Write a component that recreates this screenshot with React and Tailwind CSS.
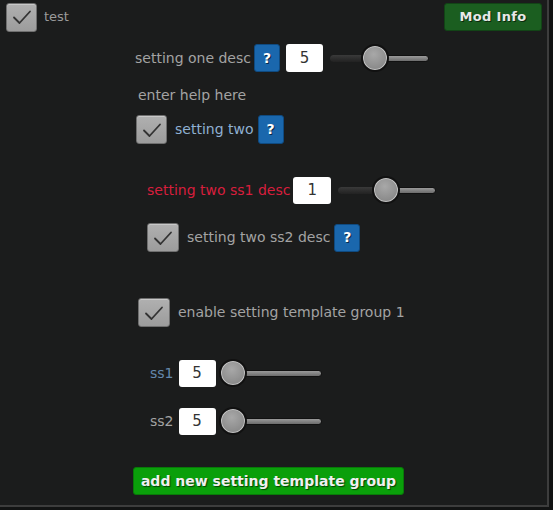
import React from "react";

const FONT = { fontFamily: '"DejaVu Sans", Verdana, sans-serif' };

function Check({ className = "" }) {
  return (
    <div className={`w-[31px] h-[29px] rounded-[3px] border border-[#6f6f6f] bg-gradient-to-b from-[#b0b0b0] to-[#9c9c9c] shadow-[inset_0_1px_0_#c8c8c8] flex items-center justify-center ${className}`}>
      <svg width="20" height="16" viewBox="0 0 20 16" fill="none">
        <path d="M2 8.5 L7.5 14 L18 2.5" stroke="#333" strokeWidth="1.8" strokeLinecap="round" strokeLinejoin="round" />
      </svg>
    </div>
  );
}

function Help({ className = "" }) {
  return (
    <div className={`w-[26px] h-[28px] rounded-[3px] bg-[#1a67ad] border border-[#0f4a80] flex items-center justify-center text-white text-[14px] font-bold [text-shadow:1px_1px_0_#0a2a4a] ${className}`}>
      ?
    </div>
  );
}

function NumBox({ value, className = "" }) {
  return (
    <div className={`w-[37px] h-[27px] rounded-[3px] bg-white flex items-center justify-center text-[15px] text-[#333] ${className}`}>
      {value}
    </div>
  );
}

function Slider({ width, pos, className = "" }) {
  const left = Math.round(pos * (width - 28));
  return (
    <div className={`relative h-[28px] ${className}`} style={{ width }}>
      <div className="absolute left-0 right-0 top-[11px] h-[7px] rounded-full border border-[#111] bg-gradient-to-b from-[#9a9a9a] to-[#6c6c6c]" />
      <div className="absolute left-0 top-[11px] h-[7px] rounded-l-full bg-gradient-to-b from-[#3a3a3a] to-[#222]" style={{ width: left + 14 }} />
      <div className="absolute top-0 w-[28px] h-[28px] rounded-full border-2 border-[#111] bg-[#9a9a9a] shadow-[inset_0_0_0_1px_#c4c4c4] bg-[radial-gradient(circle_at_45%_35%,#a8a8a8,#7e7e7e)]" style={{ left }} />
    </div>
  );
}

export default function App() {
  return (
    <div className="w-[553px] h-[510px] bg-[#121313] overflow-hidden" style={FONT}>
      <div className="w-[549px] h-[507px] bg-[#1b1c1c] border-r-2 border-b-2 border-[#3d3d3d] flex flex-col">
        {/* top bar */}
        <div className="flex items-center h-[28px] mt-[3px] pl-[6px]">
          <Check className="w-[30px] h-[28px]" />
          <span className="ml-[7px] text-[13px] text-[#9a9a9a]">test</span>
          <button className="ml-auto mr-[5px] w-[98px] h-[28px] rounded-[3px] bg-[#1b5e20] border border-[#124416] text-[13px] font-bold tracking-[0.3px] text-[#e8e8e8] [text-shadow:1px_1px_0_#0b2a0d]">
            Mod Info
          </button>
        </div>

        {/* setting one */}
        <div className="flex items-center h-[28px] mt-[13px] ml-[135px]">
          <span className="text-[14px] text-[#a3a3a3]">setting one desc</span>
          <Help className="ml-[3px]" />
          <NumBox value="5" className="ml-[6px] h-[28px]" />
          <Slider width={99} pos={0.44} className="ml-[7px]" />
        </div>

        <div className="mt-[15px] ml-[138px] text-[14px] leading-[17px] text-[#a3a3a3]">enter help here</div>

        {/* setting two */}
        <div className="flex items-center h-[29px] mt-[11px] ml-[136px]">
          <Check />
          <span className="ml-[8px] text-[14px] text-[#8fb0d2]">setting two</span>
          <Help className="ml-[4px] h-[29px]" />
        </div>

        <div className="flex items-center h-[28px] mt-[32px] ml-[147px]">
          <span className="text-[14px] text-[#d81e3c]">setting two ss1 desc</span>
          <NumBox value="1" className="ml-[3px] w-[38px]" />
          <Slider width={98} pos={0.49} className="ml-[7px]" />
        </div>

        <div className="flex items-center h-[29px] mt-[19px] ml-[147px]">
          <Check className="w-[32px]" />
          <span className="ml-[8px] text-[14px] text-[#a3a3a3]">setting two ss2 desc</span>
          <Help className="ml-[4px]" />
        </div>

        {/* template group */}
        <div className="flex items-center h-[29px] mt-[46px] ml-[138px]">
          <Check className="w-[32px]" />
          <span className="ml-[8px] text-[14px] text-[#a3a3a3]">enable setting template group 1</span>
        </div>

        <div className="flex items-center h-[28px] mt-[32px] ml-[150px]">
          <span className="text-[14px] text-[#6488ad]">ss1</span>
          <NumBox value="5" className="ml-[5px] w-[36px]" />
          <Slider width={103} pos={0} className="ml-[3px]" />
        </div>

        <div className="flex items-center h-[28px] mt-[20px] ml-[150px]">
          <span className="text-[14px] text-[#a3a3a3]">ss2</span>
          <NumBox value="5" className="ml-[5px] w-[36px]" />
          <Slider width={103} pos={0} className="ml-[3px]" />
        </div>

        <button className="mt-[32px] ml-[133px] w-[271px] h-[28px] rounded-[3px] bg-[#0a9f0a] border border-[#087a08] text-[14px] font-bold text-[#f0f0f0] [text-shadow:1px_1px_1px_#044004]">
          add new setting template group
        </button>
      </div>
    </div>
  );
}
